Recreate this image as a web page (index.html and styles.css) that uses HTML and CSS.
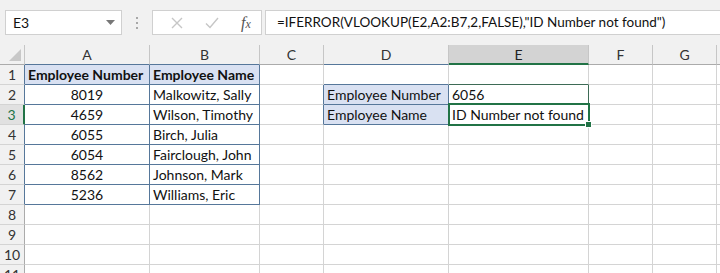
FILE: index.html
```html
<!DOCTYPE html>
<html lang="en">
<head>
  <meta charset="UTF-8" />
  <title>IFERROR VLOOKUP</title>
  <link rel="stylesheet" href="styles.css">
</head>
<body>
  <div class="barra">
    <div class="namebox">
      <span>E3</span>
      <svg class="seta" width="9" height="5" viewBox="0 0 9 5"><path d="M0 0h9L4.5 5z" fill="#777"/></svg>
    </div>
    <div class="pontos"><i></i><i></i><i></i></div>
    <div class="botoes">
      <svg width="12" height="12" viewBox="0 0 12 12"><path d="M1 1l10 10M11 1L1 11" stroke="#c6c6c6" stroke-width="1.4" fill="none"/></svg>
      <svg width="14" height="12" viewBox="0 0 14 12"><path d="M1 6.5l4 4L13 1" stroke="#c6c6c6" stroke-width="1.4" fill="none"/></svg>
      <span class="fx">f<small>x</small></span>
    </div>
    <div class="formula">=IFERROR(VLOOKUP(E2,A2:B7,2,FALSE),"ID Number not found")</div>
  </div>

  <div class="planilha">
    <!-- cabecalho -->
    <div class="cab canto"><svg width="12" height="12" viewBox="0 0 12 12"><path d="M12 0v12H0z" fill="#c8c8c8"/></svg></div>
    <div class="cab tb-b">A</div>
    <div class="cab tb-b">B</div>
    <div class="cab">C</div>
    <div class="cab tb-b">D</div>
    <div class="cab ativo tb-b">E</div>
    <div class="cab">F</div>
    <div class="cab">G</div>
    <div class="cab"></div>

    <!-- linha 1 -->
    <div class="lin tb-r">1</div>
    <div class="cel tb azul neg">Employee Number</div>
    <div class="cel tb azul neg">Employee Name</div>
    <div class="cel"></div>
    <div class="cel tb-b"></div>
    <div class="cel tv-b"></div>
    <div class="cel"></div>
    <div class="cel"></div>
    <div class="cel"></div>

    <!-- linha 2 -->
    <div class="lin tb-r">2</div>
    <div class="cel tb centro">8019</div>
    <div class="cel tb">Malkowitz, Sally</div>
    <div class="cel tb-r"></div>
    <div class="cel tb azul">Employee Number</div>
    <div class="cel tv">6056</div>
    <div class="cel"></div>
    <div class="cel"></div>
    <div class="cel"></div>

    <!-- linha 3 -->
    <div class="lin tb-r ativo">3</div>
    <div class="cel tb centro">4659</div>
    <div class="cel tb">Wilson, Timothy</div>
    <div class="cel tb-r"></div>
    <div class="cel tb azul">Employee Name</div>
    <div class="cel tv selecionada">ID Number not found</div>
    <div class="cel"></div>
    <div class="cel"></div>
    <div class="cel"></div>

    <!-- linha 4 -->
    <div class="lin tb-r">4</div>
    <div class="cel tb centro">6055</div>
    <div class="cel tb">Birch, Julia</div>
    <div class="cel"></div>
    <div class="cel"></div>
    <div class="cel"></div>
    <div class="cel"></div>
    <div class="cel"></div>
    <div class="cel"></div>

    <!-- linha 5 -->
    <div class="lin tb-r">5</div>
    <div class="cel tb centro">6054</div>
    <div class="cel tb">Fairclough, John</div>
    <div class="cel"></div>
    <div class="cel"></div>
    <div class="cel"></div>
    <div class="cel"></div>
    <div class="cel"></div>
    <div class="cel"></div>

    <!-- linha 6 -->
    <div class="lin tb-r">6</div>
    <div class="cel tb centro">8562</div>
    <div class="cel tb">Johnson, Mark</div>
    <div class="cel"></div>
    <div class="cel"></div>
    <div class="cel"></div>
    <div class="cel"></div>
    <div class="cel"></div>
    <div class="cel"></div>

    <!-- linha 7 -->
    <div class="lin tb-r">7</div>
    <div class="cel tb centro">5236</div>
    <div class="cel tb">Williams, Eric</div>
    <div class="cel"></div>
    <div class="cel"></div>
    <div class="cel"></div>
    <div class="cel"></div>
    <div class="cel"></div>
    <div class="cel"></div>

    <!-- linhas vazias -->
    <div class="lin">8</div>
    <div class="cel"></div><div class="cel"></div><div class="cel"></div><div class="cel"></div>
    <div class="cel"></div><div class="cel"></div><div class="cel"></div><div class="cel"></div>

    <div class="lin">9</div>
    <div class="cel"></div><div class="cel"></div><div class="cel"></div><div class="cel"></div>
    <div class="cel"></div><div class="cel"></div><div class="cel"></div><div class="cel"></div>

    <div class="lin">10</div>
    <div class="cel"></div><div class="cel"></div><div class="cel"></div><div class="cel"></div>
    <div class="cel"></div><div class="cel"></div><div class="cel"></div><div class="cel"></div>

    <div class="lin">11</div>
    <div class="cel"></div><div class="cel"></div><div class="cel"></div><div class="cel"></div>
    <div class="cel"></div><div class="cel"></div><div class="cel"></div><div class="cel"></div>
  </div>
</body>
</html>
```

FILE: styles.css
```css
* {
  margin: 0;
  padding: 0;
  box-sizing: border-box;
}

body {
  width: 720px;
  height: 273px;
  overflow: hidden;
  background: #fff;
  font-family: Lato, "Liberation Sans", sans-serif;
  color: #111;
}

/* barra de formula */
.barra {
  height: 45px;
  background: #f1f1f1;
  display: flex;
  align-items: flex-start;
  padding: 10px 0 0 5px;
}

.namebox {
  width: 117px;
  height: 25px;
  background: #fff;
  border: 1px solid #d0d0d0;
  display: flex;
  align-items: center;
  justify-content: space-between;
  padding: 0 6px 0 7px;
  font-size: 14px;
}

.pontos {
  width: 30px;
  height: 25px;
  display: flex;
  flex-direction: column;
  align-items: center;
  justify-content: center;
  gap: 3px;
}

.pontos i {
  width: 2px;
  height: 2px;
  background: #a8a8a8;
}

.botoes {
  width: 110px;
  height: 25px;
  background: #fff;
  border: 1px solid #d0d0d0;
  display: flex;
  align-items: center;
  gap: 22px;
  padding-left: 18px;
}

.fx {
  font-family: "Liberation Serif", serif;
  font-style: italic;
  font-size: 16px;
  color: #555;
}

.fx small {
  font-size: 12px;
}

.formula {
  flex: 1;
  height: 25px;
  margin-left: 3px;
  background: #fff;
  border: 1px solid #d0d0d0;
  border-right: none;
  font-size: 13.5px;
  line-height: 23px;
  padding-left: 11px;
  white-space: nowrap;
}

/* planilha */
.planilha {
  display: grid;
  grid-template-columns: 25px 125px 110px 64px 125px 140px 64px 64px 1fr;
  grid-auto-rows: 20px;
}

.cab {
  background: #f1f1f1;
  border-right: 1px solid #c6c6c6;
  border-bottom: 1px solid #ababab;
  text-align: center;
  font-size: 14px;
  line-height: 20px;
  color: #333;
}

.cab.canto {
  display: flex;
  align-items: flex-end;
  justify-content: flex-end;
  padding: 0 3px 3px 0;
}

.cab.ativo {
  background: #d3d3d3;
  border-bottom: 2px solid #217346;
  color: #222;
}

.lin {
  background: #f1f1f1;
  border-right: 1px solid #ababab;
  border-bottom: 1px solid #d4d4d4;
  text-align: center;
  font-size: 14px;
  line-height: 19px;
  color: #333;
}

.lin.ativo {
  background: #e1e1e1;
  border-right: 2px solid #217346;
  color: #217346;
}

.cel {
  border-right: 1px solid #d4d4d4;
  border-bottom: 1px solid #d4d4d4;
  font-size: 14px;
  line-height: 20px;
  padding: 0 3px;
  white-space: nowrap;
}

.centro {
  text-align: center;
}

.neg {
  font-weight: bold;
}

.azul {
  background: #d9e1f2;
}

/* bordas da tabela */
.tb {
  border-right-color: #56779a;
  border-bottom-color: #56779a;
}

.tb-r {
  border-right-color: #56779a;
}

.tb-b {
  border-bottom-color: #56779a;
}

.tv {
  border-right-color: #3e6b56;
  border-bottom-color: #3e6b56;
}

.tv-b {
  border-bottom-color: #3e6b56;
}

/* celula ativa */
.selecionada {
  position: relative;
}

.selecionada::after {
  content: "";
  position: absolute;
  top: -2px;
  left: -1px;
  right: -2px;
  bottom: -2px;
  border: 2px solid #217346;
}

.selecionada::before {
  content: "";
  position: absolute;
  right: -4px;
  bottom: -4px;
  width: 5px;
  height: 5px;
  background: #217346;
  border: 1px solid #fff;
  z-index: 1;
}
```
